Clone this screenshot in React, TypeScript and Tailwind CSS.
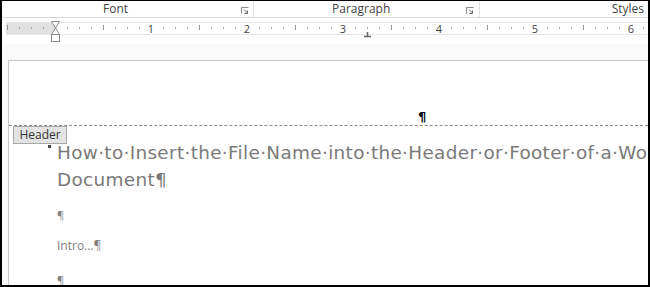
const ui = { fontFamily: '"Open Sans", "Noto Sans", sans-serif' };
const doc = { fontFamily: '"DejaVu Sans", "Open Sans", sans-serif' };

function Launcher() {
  return (
    <svg width="8" height="7" viewBox="0 0 8 7" className="shrink-0">
      <path d="M0.5 6.5V0.5H7.5" fill="none" stroke="#8a8a8a" />
      <path d="M3 2.5L6.5 6M6.5 3.5V6.5H3.5" fill="none" stroke="#666" />
    </svg>
  );
}

function Ruler() {
  const zero = 55;
  const ticks: JSX.Element[] = [];
  for (let i = -4; i <= 49; i++) {
    const x = zero + i * 12;
    if (i % 8 === 0) continue;
    if (i % 4 === 0) ticks.push(<line key={i} x1={x + 0.5} x2={x + 0.5} y1={5} y2={10} stroke="#999" />);
    else ticks.push(<line key={i} x1={x + 0.5} x2={x + 0.5} y1={7} y2={9} stroke="#aaa" />);
  }
  const nums = [1, 2, 3, 4, 5, 6];
  return (
    <svg width="644" height="26" viewBox="0 0 644 26" className="block">
      <g transform="translate(-6,-18)">
        <rect x="6" y="23" width="49" height="11" fill="#e1e1e1" />
        <line x1="6" x2="650" y1="22.5" y2="22.5" stroke="#e8e8e8" />
        <line x1="6" x2="650" y1="34.5" y2="34.5" stroke="#e8e8e8" />
        <g transform="translate(0,20)">{ticks}</g>
        {nums.map((n) => (
          <text key={n} x={zero + n * 96} y="32.5" fontSize="11" fill="#444" textAnchor="middle" fontFamily="Open Sans, sans-serif">
            {n}
          </text>
        ))}
        <path d="M51.5 21.5H59.5L55.5 28L51.5 21.5Z" fill="#fff" stroke="#8c8c8c" />
        <path d="M55.5 28L59.5 34.5H51.5L55.5 28Z" fill="#fff" stroke="#8c8c8c" />
        <rect x="51.5" y="34.5" width="8" height="7" fill="#fff" stroke="#8c8c8c" />
        <path d="M367.5 32V37M364 36.5H371" stroke="#666" strokeWidth="1.5" />
      </g>
    </svg>
  );
}

export default function App() {
  return (
    <div className="w-[650px] h-[287px] overflow-hidden bg-[#fafafa] border-l-2 border-r-2 border-t border-b-2 border-black flex flex-col">
      <div className="h-[17px] flex bg-white text-[12px] leading-[16px] text-[#444] border-b border-[#d5d5d5] shrink-0" style={ui}>
        <div className="w-[251px] flex items-center">
          <span className="ml-[101px] flex-1">Font</span>
          <span className="mr-[4px] mt-[3px]"><Launcher /></span>
        </div>
        <div className="w-px bg-[#e0e0e0]" />
        <div className="w-[225px] flex items-center">
          <span className="ml-[78px] flex-1">Paragraph</span>
          <span className="mr-[5px] mt-[3px]"><Launcher /></span>
        </div>
        <div className="w-px bg-[#e0e0e0]" />
        <div className="flex-1 flex items-center justify-end pr-[4px]">Styles</div>
      </div>
      <div className="h-[26px] bg-white pl-[4px] shrink-0">
        <Ruler />
      </div>
      <div className="flex-1 pt-[16px] pl-[6px]">
        <div className="h-[300px] bg-white border-l border-t border-[#c6c6c6]">
          <div className="h-[64px] relative">
            <span className="absolute left-[409px] top-[49px] text-[13px] font-bold leading-none text-black" style={doc}>¶</span>
          </div>
          <div className="relative border-t border-dashed border-[#8a8a8a]">
            <div className="absolute left-[4px] top-0 w-[54px] h-[18px] bg-[#e3e3e3] border border-[#a9a9a9] text-[12px] leading-[16px] text-[#333] text-center" style={ui}>
              Header
            </div>
            <div className="absolute left-[39px] top-[19px] w-[3px] h-[3px] bg-[#444]" />
            <div className="pl-[48px] pt-[13px] text-[#7a7a7a]" style={doc}>
              <div className="text-[18.4px] leading-[27px] tracking-[0.34px] whitespace-nowrap">How·to·Insert·the·File·Name·into·the·Header·or·Footer·of·a·Word</div>
              <div className="text-[18.4px] leading-[27px] tracking-[0.34px]">Document¶</div>
              <div className="text-[11px] leading-[16px] mt-[14px] text-[#808080]" style={ui}>¶</div>
              <div className="text-[12px] leading-[16px] mt-[15px] text-[#808080]" style={ui}>Intro...¶</div>
              <div className="text-[11px] leading-[16px] mt-[18px] text-[#808080]" style={ui}>¶</div>
            </div>
          </div>
        </div>
      </div>
    </div>
  );
}
